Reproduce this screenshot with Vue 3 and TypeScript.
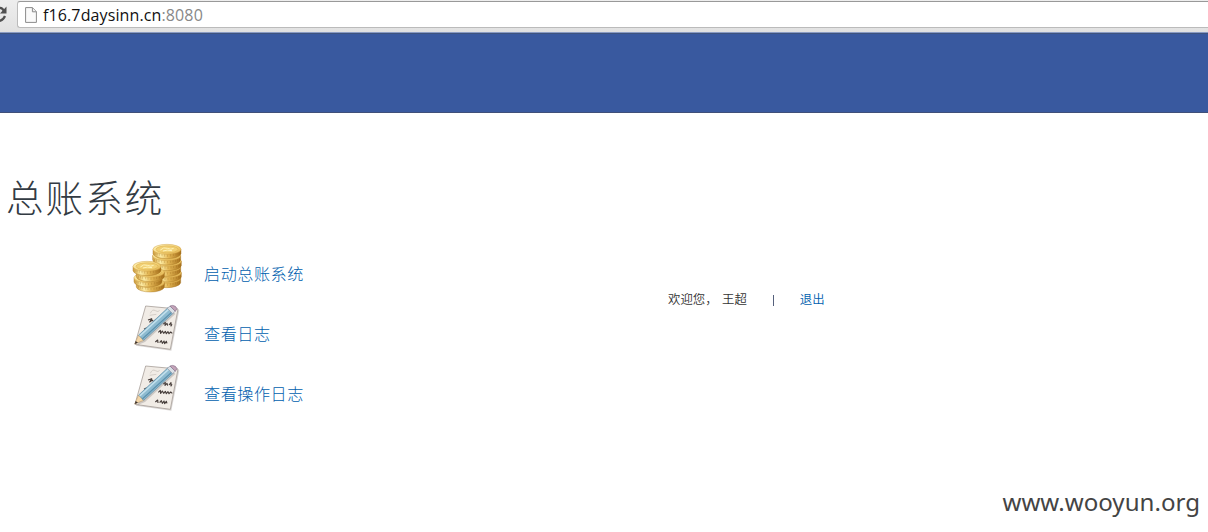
<script setup lang="ts">
interface MenuItem {
  label: string
  icon: 'coins' | 'note'
}

interface Coin {
  x: number
  y: number
}

const menu: MenuItem[] = [
  { label: '启动总账系统', icon: 'coins' },
  { label: '查看日志', icon: 'note' },
  { label: '查看操作日志', icon: 'note' },
]

// Bottom coin first, so that each one lies on the one before it.
const coins: Coin[] = [
  { x: 125, y: 121 },
  { x: 127, y: 104 },
  { x: 125, y: 87 },
  { x: 127, y: 70 },
  { x: 125, y: 53 },
  { x: 126, y: 34 },
  { x: 76, y: 134 },
  { x: 69, y: 119 },
  { x: 76, y: 103 },
  { x: 66, y: 85 },
]

const ridges = [-36, -30, -23, -15, -7, 2, 11, 19, 27, 33, 38]
</script>

<template>
  <div class="page">
    <header class="toolbar">
      <svg class="reload" viewBox="0 0 9 20">
        <path d="M-4 8C-2 5 2 5 4 9" fill="none" stroke="#505050" stroke-width="2.2" />
        <path d="M6.5 4.5V11.5H0Z" fill="#505050" />
        <path d="M5 14C3 19-2 20-5 18" fill="none" stroke="#505050" stroke-width="2.2" />
      </svg>
      <div class="address">
        <svg class="file" viewBox="0 0 12 16">
          <path d="M.6.6H7.5L11.4 4.6V15.4H.6Z" fill="#fafafa" stroke="#8b8b8b" />
          <path d="M7.4.8V4.8H11.3" fill="#eee" stroke="#8b8b8b" />
        </svg>
        <span class="url">f16.7daysinn.cn<span class="port">:8080</span></span>
      </div>
    </header>
    <div class="banner"></div>

    <h1>总账系统</h1>

    <main class="content">
      <nav class="menu">
        <a v-for="item in menu" :key="item.label" class="item">
          <svg v-if="item.icon === 'coins'" class="icon" viewBox="0 0 192 180">
            <defs>
              <linearGradient id="coinSide">
                <stop offset="0" stop-color="#d3a242" />
                <stop offset=".28" stop-color="#fdeca4" />
                <stop offset=".55" stop-color="#e3b654" />
                <stop offset="1" stop-color="#a8721d" />
              </linearGradient>
              <linearGradient id="coinFace" x2="1" y2="1">
                <stop offset="0" stop-color="#fff6c4" />
                <stop offset=".5" stop-color="#f6d97f" />
                <stop offset="1" stop-color="#dcaa45" />
              </linearGradient>
            </defs>
            <g v-for="(coin, i) in coins" :key="i" :transform="`translate(${coin.x} ${coin.y})`">
              <path d="M-42 0V13C-37 33 37 33 42 13V0Z" fill="url(#coinSide)" stroke="#a5721f" stroke-width="1.2" />
              <path
                v-for="r in ridges"
                :key="r"
                :d="`M${r} ${16 - Math.abs(r) / 6}v7`"
                stroke="#8f5f17"
                stroke-width="2"
                opacity=".4"
              />
              <ellipse rx="42" ry="15" fill="url(#coinFace)" stroke="#c9983c" stroke-width="1.2" />
              <ellipse rx="33" ry="10.5" fill="#f1d073" stroke="#d8aa4b" stroke-width="1.5" />
              <path d="M-20 2Q-10-8 1-3T20-3M-12 5Q0 0 15 4" fill="none" stroke="#fff3b8" stroke-width="3" />
            </g>
          </svg>
          <svg v-else class="icon" viewBox="0 0 192 180">
            <path d="M65 28L163 37 139 158 33 143Z" fill="#aaa5a1" opacity=".45" />
            <path d="M62 24L159 33 136 154 30 139Z" fill="#f1ece6" stroke="#aaa19b" stroke-width="2.5" />
            <path d="M76 46Q82 32 91 38T104 37M74 52L94 49" fill="none" stroke="#c4beb7" stroke-width="2" />
            <g fill="none" stroke="#453c39" stroke-width="3.4" stroke-linejoin="round">
              <path d="M69 66L80 62 74 72 82 66 86 72 91 66 94 72 99 68M115 78L121 73 120 82 126 76 128 83M132 81L138 74 138 84 141 79" />
              <path d="M57 94L64 90 63 98 70 92 74 99M100 103L106 97 107 106 112 99 116 106 121 100 124 107 129 101 132 107 137 102 142 106" />
              <path d="M91 132L98 126 99 135M104 134L109 128 112 136 117 129 119 137 124 130 126 136" />
            </g>
            <path d="M38 141L60 132 151 48 140 36 45 116Z" fill="#776f70" opacity=".3" />
            <path d="M29 138L41 111 56 127Z" fill="#f3d6a8" stroke="#b89263" stroke-width="1.5" />
            <path d="M29 138L32 129 39 134Z" fill="#3c3432" />
            <path d="M41 111L128 30 145 45 56 127Z" fill="#8ebbd0" stroke="#5c8da7" stroke-width="2" />
            <path d="M44 114L132 33" stroke="#c4e1ed" stroke-width="5" />
            <path d="M52 123L141 42" stroke="#5b90ac" stroke-width="3.5" />
            <path d="M127 31L135 24 151 39 143 47Z" fill="#d9dfe5" stroke="#9297a5" stroke-width="2" />
            <path d="M135 24Q143 20 151 25 160 31 151 40Z" fill="#c3a3b8" stroke="#86708a" stroke-width="2" />
          </svg>
          <span>{{ item.label }}</span>
        </a>
      </nav>
      <div class="account">
        <span class="welcome">欢迎您，</span>
        <span class="name">王超</span>
        <span class="divider"></span>
        <a class="logout">退出</a>
      </div>
    </main>

    <footer>www.wooyun.org</footer>
  </div>
</template>

<style>
body {
  margin: 0;
  background: #fff;
}
</style>

<style scoped>
.page {
  display: flex;
  flex-direction: column;
  width: 1208px;
  height: 532px;
  overflow: hidden;
  background: #fff;
  color: #333;
  font-family: "Liberation Sans", "Noto Sans CJK SC", sans-serif;
}

.toolbar {
  display: flex;
  flex: none;
  box-sizing: border-box;
  height: 33px;
  padding-top: 1px;
  background: linear-gradient(#eee, #e1e1e1);
  border-bottom: 1px solid #8a9cc4;
}

.reload {
  width: 9px;
  height: 20px;
  margin: 1px 8px 0 0;
}

.address {
  display: flex;
  align-items: center;
  flex: 1;
  box-sizing: border-box;
  height: 27px;
  padding-left: 7px;
  background: #fff;
  border: solid #bbb;
  border-top-color: #999;
  border-width: 1px 0 1px 1px;
  border-radius: 3px 0 0 3px;
}

.file {
  width: 12px;
  height: 16px;
  margin-right: 6px;
}

.url {
  color: #111;
  font: 16px/24px "Open Sans", "Noto Sans", sans-serif;
  letter-spacing: 0.12px;
}

.port {
  color: #888;
}

.banner {
  flex: none;
  box-sizing: border-box;
  height: 80px;
  background: #39599f;
  border-top: 1px solid #3f547f;
  border-bottom: 1px solid #405079;
}

h1 {
  margin: 55px 0 0 6px;
  height: 70px;
  color: #333b43;
  font-size: 37.5px;
  font-weight: 300;
  letter-spacing: 2.1px;
  line-height: 63px;
}

.content {
  display: flex;
  align-items: flex-start;
}

.menu {
  width: 668px;
  box-sizing: border-box;
  padding-left: 125px;
}

.item {
  display: flex;
  height: 60px;
  color: #0060ae;
  font-size: 16.1px;
  font-weight: 300;
  letter-spacing: 0.55px;
  line-height: 24px;
}

.item span {
  margin: 24px 0 0 15px;
}

.icon {
  width: 64px;
  height: 60px;
}

.account {
  display: flex;
  align-items: center;
  height: 20px;
  margin-top: 52px;
  font-size: 12.4px;
  font-weight: 350;
  line-height: 20px;
}

.welcome {
  width: 54px;
}

.divider {
  width: 1px;
  height: 11px;
  margin: 0 26px;
  background: #55607c;
}

.logout {
  color: #0060ae;
}

footer {
  margin: auto 8px 13px auto;
  color: #444;
  font: 24.1px/34px "Noto Sans", sans-serif;
}
</style>
